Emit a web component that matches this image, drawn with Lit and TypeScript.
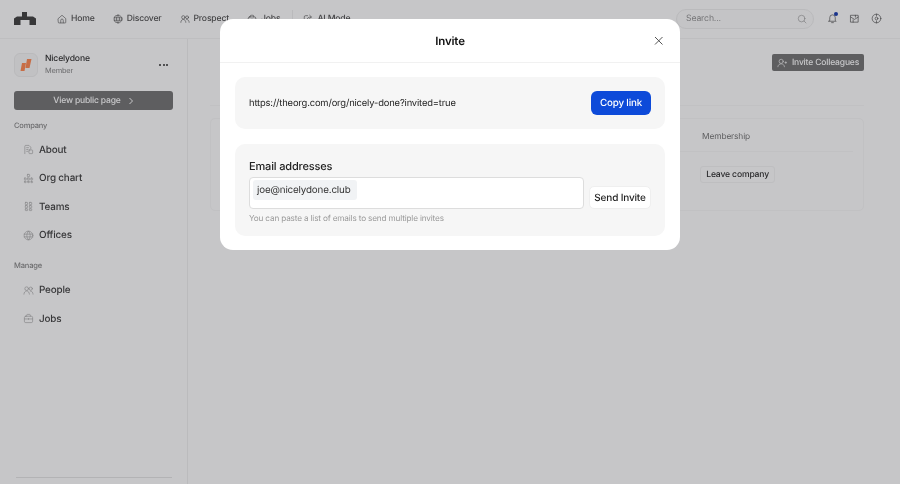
import { LitElement, html, css, svg } from "lit";
import { customElement } from "lit/decorators.js";

const ic = (p: unknown, s = 14) => html`<svg class="ic" width=${s} height=${s} viewBox="0 0 24 24" fill="none" stroke="currentColor" stroke-width="1.5" stroke-linecap="round" stroke-linejoin="round">${p}</svg>`;

const I = {
  home: svg`<path d="M3 11l9-8 9 8v9a1.500 1.500 0 0 1-1.500 1.500h-15A1.500 1.500 0 0 1 3 20z"/><path d="M9 21v-6a3 3 0 0 1 6 0v6"/>`,
  globe: svg`<circle cx="12" cy="12" r="9.500"/><path d="M2.500 9h19M2.500 15h19M12 2.500c-5 5-5 14 0 19M12 2.500c5 5 5 14 0 19"/>`,
  people: svg`<circle cx="8" cy="8" r="4"/><circle cx="17" cy="8" r="3.500"/><path d="M2 20c0-4 3-7 6-7s6 3 6 7M16 13c3 0 6 3 6 7"/>`,
  jobs: svg`<rect x="3" y="7" width="18" height="14" rx="3"/><path d="M8 7V5a2 2 0 0 1 2-2h4a2 2 0 0 1 2 2v2M3 13h18M12 12v2"/>`,
  ai: svg`<path d="M11 4H6a3 3 0 0 0-3 3v11a3 3 0 0 0 3 3h11a3 3 0 0 0 3-3v-5"/><path d="M9 15c0-5 4-8 11-8M16 3l4 4-4 4"/>`,
  search: svg`<circle cx="11" cy="11" r="8"/><path d="M17 17l4.500 4.500"/>`,
  bell: svg`<path d="M6 16V10a6 6 0 0 1 12 0v6l2 2H4z"/><path d="M10 21h4"/>`,
  inbox: svg`<path d="M4 5h16v15H4z"/><path d="M4 9l8 5 8-5M14 5v4M9 20v-5"/>`,
  gear: svg`<circle cx="12" cy="12" r="9.500"/><circle cx="12" cy="12" r="3"/><path d="M12 2.500v4M12 17.500v4"/>`,
  about: svg`<path d="M4 21V5a2 2 0 0 1 2-2h7l4 4v4"/><path d="M8 8h4M8 12h3M8 16h3"/><rect x="13" y="13" width="8" height="8" rx="1.500"/>`,
  org: svg`<rect x="9.500" y="3" width="5" height="5" rx="1"/><rect x="9.500" y="11" width="5" height="4" rx="1"/><rect x="3" y="11" width="4" height="4" rx="1"/><rect x="17" y="11" width="4" height="4" rx="1"/><rect x="3" y="18" width="4" height="3" rx="1"/><rect x="10" y="18" width="4" height="3" rx="1"/><rect x="17" y="18" width="4" height="3" rx="1"/>`,
  teams: svg`<rect x="5" y="3" width="5" height="5" rx="1"/><rect x="14" y="3" width="5" height="5" rx="1"/><rect x="5" y="10" width="5" height="5" rx="1"/><rect x="14" y="10" width="5" height="5" rx="1"/><rect x="5" y="17" width="5" height="4" rx="1"/><rect x="14" y="17" width="5" height="4" rx="1"/>`,
  invite: svg`<circle cx="10" cy="8" r="5"/><path d="M2 21c0-4 4-7 8-7s8 3 8 7M19 11h4M21 9v4"/>`,
};

@customElement("app-root")
export class AppRoot extends LitElement {
  static styles = css`
    :host { display: block; width: 900px; height: 484px; position: relative; overflow: hidden; background: #fff; font-family: Inter, "Liberation Sans", sans-serif; color: #111; text-rendering: geometricPrecision; letter-spacing: -0.01em; filter: blur(0.3px); }
    * { box-sizing: border-box; }
    .ic { display: block; flex: none; }
    .page { width: 900px; height: 484px; display: flex; flex-direction: column; background: #fefefe; }
    .top { height: 39px; flex: none; border-bottom: 1px solid #f4f4f4; display: flex; align-items: center; padding: 0 18px 1px 14px; }
    .logo { margin-right: 21px; display: block; }
    .nav { display: flex; align-items: center; gap: 18px; font-size: 8.600px; font-weight: 500; color: #555; }
    .nav span { display: flex; align-items: center; gap: 4px; }
    .nav .ic { color: #555; }
    .nav .sep { width: 1px; height: 18px; background: #eee; margin: 0 -8px 0 -6px; }
    .right { margin-left: auto; display: flex; align-items: center; }
    .search { width: 138px; height: 20px; border: 1px solid #eee; border-radius: 10px; background: #fbfbfb; display: flex; align-items: center; justify-content: space-between; padding: 0 6px 0 9px; font-size: 8.700px; color: #999; margin-right: 13px; }
    .icons { display: flex; gap: 11px; color: #555; }
    .bellwrap { position: relative; }
    .dot { position: absolute; right: 0; top: -1px; width: 4px; height: 4px; border-radius: 50%; background: #1d3fb0; }
    .body { flex: 1; display: flex; min-height: 0; }
    .side { width: 188px; flex: none; border-right: 1px solid #f0f0f0; padding: 13px 14px 0; display: flex; flex-direction: column; }
    .co { display: flex; align-items: center; gap: 7px; height: 26px; padding-right: 4px; }
    .av { width: 24px; height: 24px; border-radius: 6px; border: 1px solid #eee; background: #f8f8f8; display: flex; align-items: center; justify-content: center; flex: none; }
    .co .name { font-size: 8.600px; font-weight: 500; color: #333; line-height: 12px; }
    .co .role { font-size: 7.400px; color: #888; line-height: 12px; margin-top: 0; }
    .co .dots { margin-left: auto; display: flex; gap: 1.500px; margin-right: 1px; }
    .co .dots i { width: 2px; height: 2px; border-radius: 50%; background: #333; }
    .view { margin-top: 13px; height: 19px; border-radius: 3px; background: #777; color: #fff; display: flex; align-items: center; justify-content: center; gap: 7px; font-size: 8.500px; font-weight: 500; }
    .label { font-size: 7.500px; font-weight: 500; color: #888; line-height: 10px; }
    .label.a { margin-top: 10.500px; }
    .label.b { margin-top: 11.500px; }
    .item { height: 28.500px; display: flex; align-items: center; gap: 5px; padding-left: 9px; font-size: 9.900px; font-weight: 500; color: #444; }
    .item .ic { color: #aaa; }
    .items { margin-top: 5px; }
    .bar { margin-top: auto; height: 1px; background: #e6e6e6; margin-bottom: 6px; margin-right: 1px; margin-left: 2px; }
    .main { flex: 1; padding: 15px 36px 0 22px; display: flex; flex-direction: column; }
    .inv-row { display: flex; justify-content: flex-end; }
    .inv { height: 17px; width: 92px; border-radius: 2px; background: #777; color: #fff; display: flex; align-items: center; justify-content: center; gap: 5px; font-size: 8.500px; font-weight: 500; }
    .rule { margin-top: 34px; height: 1px; background: #f7f7f7; }
    .card { margin-top: 12px; height: 93px; border: 1px solid #f7f7f7; border-radius: 5px; padding: 0 10px; }
    .ch { height: 33px; padding: 3px 103px 0 0; border-bottom: 1px solid #f7f7f7; display: flex; align-items: center; justify-content: flex-end; font-size: 8.400px; color: #777; }
    .cb { display: flex; justify-content: flex-end; padding: 14px 78px 0 0; }
    .leave { height: 17px; padding: 0 5px; border: 1px solid #f4f4f4; border-radius: 3px; font-size: 8.600px; font-weight: 500; color: #333; display: flex; align-items: center; }
    .overlay { position: absolute; inset: 0; background: rgba(14, 14, 20, 0.23); display: flex; justify-content: center; align-items: flex-start; padding-top: 19px; }
    .modal { width: 460px; height: 231px; background: #fff; border-radius: 13px; display: flex; flex-direction: column; }
    .mh { height: 44px; flex: none; border-bottom: 1px solid #f1f1f1; display: flex; align-items: center; justify-content: center; position: relative; font-size: 11.500px; font-weight: 600; color: #111; }
    .close { position: absolute; right: 16px; top: 16px; color: #555; display: block; }
    .mb { padding: 14px 15px; display: flex; flex-direction: column; gap: 15px; }
    .sec { background: #f6f6f6; border-radius: 10px; }
    .link { height: 52px; display: flex; align-items: center; justify-content: space-between; padding: 0 14px; font-size: 9.400px; color: #222; }
    .copy { height: 24px; width: 60px; background: #0d4ad9; color: #fff; border-radius: 6px; font-size: 9.800px; font-weight: 500; display: flex; align-items: center; justify-content: center; }
    .mail { height: 92px; padding: 13.500px 14px 0; }
    .mail h3 { margin: 0; font-size: 11px; font-weight: 500; color: #222; line-height: 16px; }
    .row { margin-top: 3.500px; display: flex; align-items: flex-end; gap: 5px; }
    .input { width: 335px; height: 32px; border: 1px solid #ddd; border-radius: 4px; background: #fff; display: flex; align-items: flex-start; padding: 2px 3px 0; }
    .chip { height: 20px; padding: 0 6px 0 4px; background: #f1f3f5; border-radius: 3px; font-size: 9.800px; color: #333; display: flex; align-items: center; }
    .send { flex: 1; height: 23px; background: #fff; border: 1px solid #efefef; border-radius: 5px; font-size: 10px; font-weight: 500; color: #222; display: flex; align-items: center; justify-content: center; }
    .hint { margin-top: 4px; font-size: 8.200px; color: #999; line-height: 11px; }
  `;

  render() {
    const item = (p: unknown, t: string) => html`<div class="item">${ic(p, 11)}<span>${t}</span></div>`;
    return html`
      <div class="page">
        <header class="top">
          <svg class="logo" width="22" height="13" viewBox="0 0 22 13" fill="#444"><path d="M8 0h5v4.500h6l3 2v6.500h-6.500V8h-9v5H0V6.500l3-2h5z"/></svg>
          <nav class="nav">
            <span>${ic(I.home, 10)}Home</span>
            <span>${ic(I.globe, 10)}Discover</span>
            <span>${ic(I.people, 10)}Prospect</span>
            <span>${ic(I.jobs, 10)}Jobs</span>
            <i class="sep"></i>
            <span>${ic(I.ai, 10)}AI Mode</span>
          </nav>
          <div class="right">
            <div class="search"><span>Search...</span>${ic(I.search, 10)}</div>
            <div class="icons">
              <div class="bellwrap">${ic(I.bell, 11)}<i class="dot"></i></div>
              ${ic(I.inbox, 11)}${ic(I.gear, 11)}
            </div>
          </div>
        </header>
        <div class="body">
          <aside class="side">
            <div class="co">
              <div class="av"><svg width="14" height="14" viewBox="0 0 14 14" fill="#ff8a55"><path d="M3 5h4L5.500 13H1.500zM8 1h4.500L10.500 10H6.500z"/></svg></div>
              <div><div class="name">Nicelydone</div><div class="role">Member</div></div>
              <div class="dots"><i></i><i></i><i></i></div>
            </div>
            <div class="view">View public page <svg width="6" height="8" viewBox="0 0 6 8" fill="none" stroke="#fff" stroke-width="1"><path d="M1.500 1l3 3-3 3"/></svg></div>
            <div class="label a">Company</div>
            <div class="items">
              ${item(I.about, "About")}${item(I.org, "Org chart")}${item(I.teams, "Teams")}${item(I.globe, "Offices")}
            </div>
            <div class="label b">Manage</div>
            <div class="items">
              ${item(I.people, "People")}${item(I.jobs, "Jobs")}
            </div>
            <div class="bar"></div>
          </aside>
          <main class="main">
            <div class="inv-row"><div class="inv">${ic(I.invite, 10)}Invite Colleagues</div></div>
            <div class="rule"></div>
            <div class="card">
              <div class="ch">Membership</div>
              <div class="cb"><div class="leave">Leave company</div></div>
            </div>
          </main>
        </div>
      </div>
      <div class="overlay">
        <section class="modal">
          <div class="mh">Invite
            <svg class="close" width="11" height="11" viewBox="0 0 11 11" fill="none" stroke="currentColor" stroke-width="1"><path d="M2 2l7.500 7.500M9.500 2L2 9.500"/></svg>
          </div>
          <div class="mb">
            <div class="sec link"><span>https://theorg.com/org/nicely-done?invited=true</span><div class="copy">Copy link</div></div>
            <div class="sec mail">
              <h3>Email addresses</h3>
              <div class="row">
                <div class="input"><div class="chip">joe@nicelydone.club</div></div>
                <div class="send">Send Invite</div>
              </div>
              <div class="hint">You can paste a list of emails to send multiple invites</div>
            </div>
          </div>
        </section>
      </div>
    `;
  }
}
